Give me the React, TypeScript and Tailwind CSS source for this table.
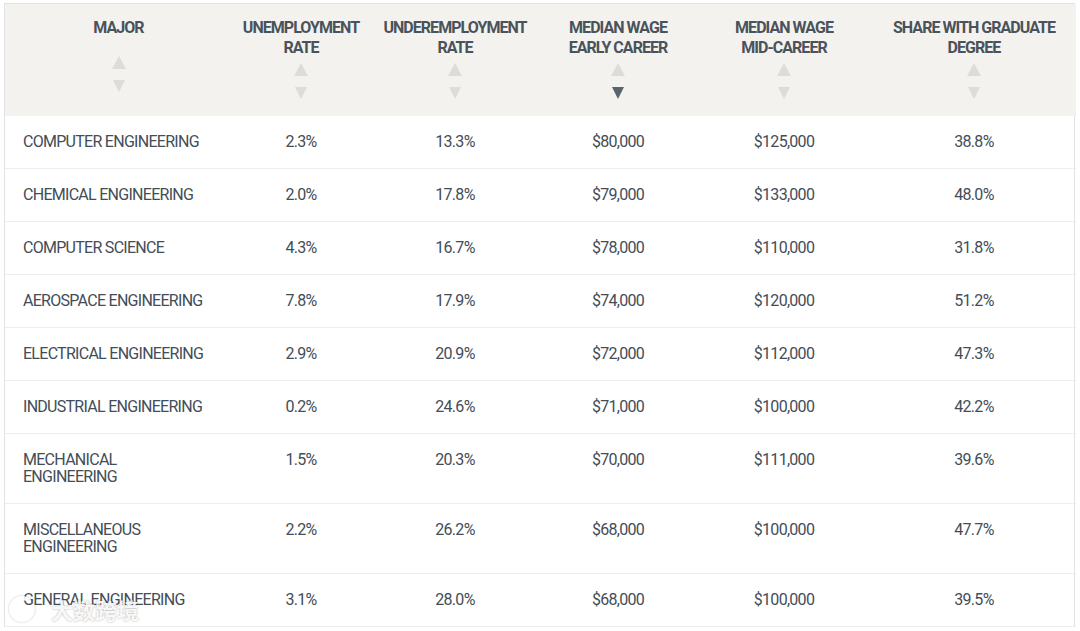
import React from "react";

type Row = {
  major: string;
  unemployment: string;
  underemployment: string;
  early: string;
  mid: string;
  grad: string;
};

const rows: Row[] = [
  { major: "COMPUTER ENGINEERING", unemployment: "2.3%", underemployment: "13.3%", early: "$80,000", mid: "$125,000", grad: "38.8%" },
  { major: "CHEMICAL ENGINEERING", unemployment: "2.0%", underemployment: "17.8%", early: "$79,000", mid: "$133,000", grad: "48.0%" },
  { major: "COMPUTER SCIENCE", unemployment: "4.3%", underemployment: "16.7%", early: "$78,000", mid: "$110,000", grad: "31.8%" },
  { major: "AEROSPACE ENGINEERING", unemployment: "7.8%", underemployment: "17.9%", early: "$74,000", mid: "$120,000", grad: "51.2%" },
  { major: "ELECTRICAL ENGINEERING", unemployment: "2.9%", underemployment: "20.9%", early: "$72,000", mid: "$112,000", grad: "47.3%" },
  { major: "INDUSTRIAL ENGINEERING", unemployment: "0.2%", underemployment: "24.6%", early: "$71,000", mid: "$100,000", grad: "42.2%" },
  { major: "MECHANICAL\nENGINEERING", unemployment: "1.5%", underemployment: "20.3%", early: "$70,000", mid: "$111,000", grad: "39.6%" },
  { major: "MISCELLANEOUS\nENGINEERING", unemployment: "2.2%", underemployment: "26.2%", early: "$68,000", mid: "$100,000", grad: "47.7%" },
  { major: "GENERAL ENGINEERING", unemployment: "3.1%", underemployment: "28.0%", early: "$68,000", mid: "$100,000", grad: "39.5%" },
];

const headers = [
  { label: ["MAJOR"], width: "w-[227px]", active: false },
  { label: ["UNEMPLOYMENT", "RATE"], width: "w-[138px]", active: false },
  { label: ["UNDEREMPLOYMENT", "RATE"], width: "w-[170px]", active: false },
  { label: ["MEDIAN WAGE", "EARLY CAREER"], width: "w-[156px]", active: true },
  { label: ["MEDIAN WAGE", "MID-CAREER"], width: "w-[176px]", active: false },
  { label: ["SHARE WITH GRADUATE", "DEGREE"], width: "w-[204px]", active: false },
];

function SortArrows({ active, single }: { active: boolean; single: boolean }) {
  return (
    <div className={`flex flex-col items-center gap-[11px] ${single ? "mt-[18px]" : "mt-[5px]"}`}>
      <svg width="14" height="13" viewBox="0 0 14 13">
        <polygon points="7,0 14,13 0,13" fill="#dcdcda" />
      </svg>
      <svg width="12" height="12" viewBox="0 0 12 12">
        <polygon points="0,0 12,0 6,12" fill={active ? "#59646c" : "#dcdcda"} />
      </svg>
    </div>
  );
}

export default function App() {
  return (
    <div className="w-[1080px] h-[631px] overflow-hidden bg-white relative" style={{ fontFamily: "Roboto, 'Liberation Sans', sans-serif" }}>
      <div className="ml-[4px] mt-[3px] w-[1071px] border-x border-t border-[#e2e2e0]">
        <table className="w-full table-fixed border-collapse">
          <thead className="bg-[#f4f2ee]">
            <tr>
              {headers.map((h, i) => (
                <th key={i} className={`${h.width} align-top pt-[14px] pb-[17px] px-0 text-center`}>
                  <div className="text-[16px] leading-[20px] font-bold text-[#4a535b] tracking-[-0.06em]">
                    {h.label.map((l, j) => (
                      <div key={j}>{l}</div>
                    ))}
                  </div>
                  <SortArrows active={h.active} single={h.label.length === 1} />
                </th>
              ))}
            </tr>
          </thead>
          <tbody className="text-[16px] leading-[17px] text-[#434d57] tracking-[-0.045em]">
            {rows.map((r, i) => (
              <tr key={i} className="border-b border-[#ededeb]">
                <td className="align-top pt-[17px] pb-[18px] pl-[18px] pr-2 whitespace-pre-line">{r.major}</td>
                <td className="align-top pt-[17px] pb-[18px] text-center">{r.unemployment}</td>
                <td className="align-top pt-[17px] pb-[18px] text-center">{r.underemployment}</td>
                <td className="align-top pt-[17px] pb-[18px] text-center">{r.early}</td>
                <td className="align-top pt-[17px] pb-[18px] text-center">{r.mid}</td>
                <td className="align-top pt-[17px] pb-[18px] text-center">{r.grad}</td>
              </tr>
            ))}
          </tbody>
        </table>
      </div>
      <div
        className="absolute left-[9px] top-[596px] flex items-center text-white/90 text-[22px] font-bold [text-shadow:0_0_2px_rgba(0,0,0,0.35)]"
        style={{ fontFamily: "'Noto Sans CJK SC', sans-serif" }}
      >
        <span className="w-[26px] h-[26px] rounded-full border-[4px] border-white/90 border-r-transparent inline-block shadow-[0_0_2px_rgba(0,0,0,0.3)]" />
        <span className="ml-[16px] leading-[26px]">大数跨境</span>
      </div>
    </div>
  );
}
